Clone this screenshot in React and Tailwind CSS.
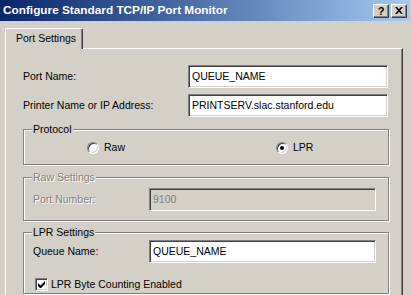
import React from "react";

const sunken =
  "border border-t-[#808080] border-l-[#808080] border-b-white border-r-white shadow-[inset_1px_1px_0_#404040,inset_-1px_-1px_0_#d4d0c8]";

const etched =
  "border border-[#808080] shadow-[inset_1px_1px_0_#fff,1px_1px_0_#fff]";

const disabledText = "text-[#808080] [text-shadow:1px_1px_0_#fff]";

const GroupBox = ({ label, disabled, className, children }) => (
  <div className={`relative ${etched} ${className}`}>
    <span
      className={`absolute -top-[7px] left-[8px] px-[1px] leading-[13px] bg-[#d4d0c8] ${
        disabled ? disabledText : "text-black"
      }`}
    >
      {label}
    </span>
    {children}
  </div>
);

const TextBox = ({ value, disabled, className }) => (
  <div
    className={`${sunken} h-[23px] flex items-center pl-[3px] ${
      disabled ? "bg-[#d4d0c8] text-[#808080]" : "bg-white text-black"
    } ${className}`}
  >
    {value}
  </div>
);

const Radio = ({ checked }) => (
  <div className="w-[12px] h-[12px] rounded-full bg-white border border-t-[#808080] border-l-[#808080] border-b-white border-r-white shadow-[inset_1px_1px_0_#404040,inset_-1px_-1px_0_#d4d0c8] flex items-center justify-center">
    {checked && <div className="w-[4px] h-[4px] rounded-full bg-black" />}
  </div>
);

const TitleButton = ({ children }) => (
  <div className="w-[16px] h-[14px] bg-[#d4d0c8] border border-t-white border-l-white border-b-[#404040] border-r-[#404040] shadow-[inset_-1px_-1px_0_#808080] flex items-center justify-center">
    {children}
  </div>
);

export default function App() {
  return (
    <div className="w-[412px] h-[295px] overflow-hidden bg-[#d4d0c8] font-['Liberation_Sans',Arial,sans-serif] text-[10.5px] text-black">
      {/* title bar */}
      <div className="h-[21px] w-[410px] bg-linear-to-r from-[#0a246a] to-[#a6caf0] flex items-center justify-between pl-[3px] pr-[3px]">
        <span className="text-white font-bold text-[11.8px] leading-none">
          Configure Standard TCP/IP Port Monitor
        </span>
        <div className="flex gap-[2px]">
          <TitleButton>
            <span className="font-bold text-[11px] leading-none mt-[1px]">?</span>
          </TitleButton>
          <TitleButton>
            <svg width="8" height="7" viewBox="0 0 8 7">
              <path d="M0 0h2l2 2.2L6 0h2L5 3.5 8 7H6L4 4.8 2 7H0l3-3.5z" fill="#000" />
            </svg>
          </TitleButton>
        </div>
      </div>

      {/* tabs */}
      <div className="pl-[5px] pt-[7px]">
        <div className="flex">
          <div className="relative z-10 -mb-px h-[21px] w-[78px] bg-[#d4d0c8] border-l border-t border-r border-l-white border-t-white border-r-[#404040] rounded-t-[2px] shadow-[inset_-1px_0_0_#808080] flex items-center pl-[10px]">
            Port Settings
          </div>
        </div>

        {/* panel */}
        <div className="w-[398px] h-[260px] border-l border-t border-r border-l-white border-t-white border-r-[#404040] shadow-[inset_-1px_0_0_#808080] pl-[17px] pt-[16px]">
          <div className="flex items-center">
            <span className="w-[165px]">Port Name:</span>
            <TextBox value="QUEUE_NAME" className="w-[200px]" />
          </div>
          <div className="flex items-center mt-[6px]">
            <span className="w-[165px]">Printer Name or IP Address:</span>
            <TextBox value="PRINTSERV.slac.stanford.edu" className="w-[200px]" />
          </div>

          <GroupBox label="Protocol" className="mt-[12px] w-[366px] h-[36px]">
            <div className="flex items-center h-full pl-[63px] pt-[1px]">
              <div className="flex items-center gap-[5px] w-[189px]">
                <Radio />
                <span>Raw</span>
              </div>
              <div className="flex items-center gap-[5px]">
                <Radio checked />
                <span>LPR</span>
              </div>
            </div>
          </GroupBox>

          <GroupBox label="Raw Settings" disabled className="mt-[12px] w-[366px] h-[44px]">
            <div className="flex items-center pl-[9px] pt-[10px]">
              <span className={`w-[116px] ${disabledText}`}>Port Number:</span>
              <TextBox value="9100" disabled className="w-[227px]" />
            </div>
          </GroupBox>

          <GroupBox label="LPR Settings" className="mt-[11px] w-[366px] h-[62px]">
            <div className="flex items-center pl-[9px] pt-[7px]">
              <span className="w-[116px]">Queue Name:</span>
              <TextBox value="QUEUE_NAME" className="w-[227px]" />
            </div>
            <div className="flex items-center pl-[11px] mt-[14px] gap-[3px]">
              <div className={`${sunken} w-[13px] h-[13px] bg-white flex items-center justify-center`}>
                <svg width="7" height="7" viewBox="0 0 7 7">
                  <path d="M0 2v3l2 2h1l4-4V0L2.5 4.5z" fill="#000" />
                </svg>
              </div>
              <span>LPR Byte Counting Enabled</span>
            </div>
          </GroupBox>
        </div>
      </div>
    </div>
  );
}
